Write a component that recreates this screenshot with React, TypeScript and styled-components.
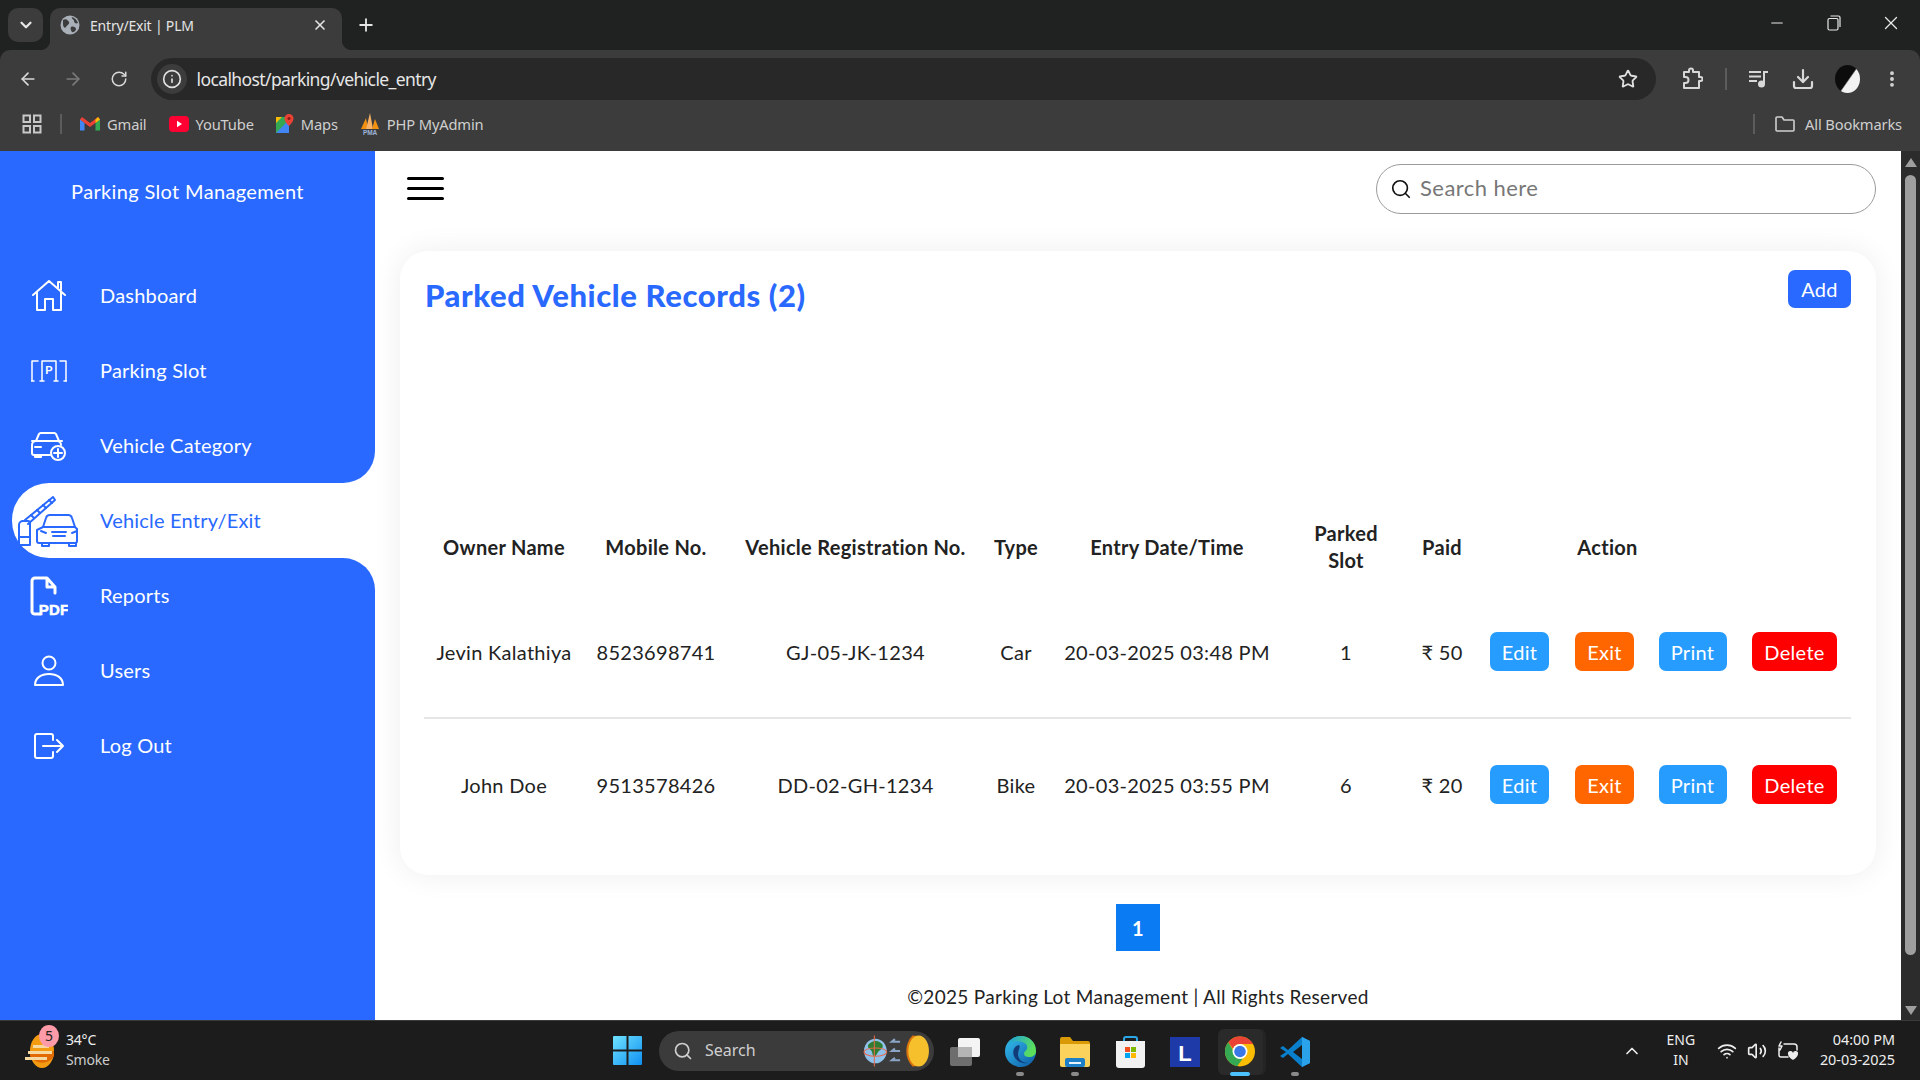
import styled, { createGlobalStyle } from "styled-components";
import { ArrowLeft, ArrowRight, RotateCw, Star, Download, EllipsisVertical, Plus, X, ChevronDown, ChevronUp, Search, Info, Minus, Wifi, Volume2 } from "lucide-react";

const BLUE = "#2969ff";
const UI_FONT = `"Noto Sans", "Open Sans", sans-serif`;
const PAGE_FONT = `"Lato", "Noto Sans", sans-serif`;

const GlobalStyle = createGlobalStyle`
  html, body { margin: 0; padding: 0; height: 100%; overflow: hidden; background: #fff; }
  * { box-sizing: border-box; }
`;

const Screen = styled.div`
  width: 1920px;
  height: 1080px;
  display: flex;
  flex-direction: column;
  overflow: hidden;
  background: #202221;
  font-family: ${PAGE_FONT};
  letter-spacing: 0.3px;
`;

/* browser chrome */
const TabStrip = styled.div`
  height: 50px;
  background: #202221;
  display: flex;
  padding: 8px 0 0 8px;
  font-family: ${UI_FONT};
  letter-spacing: 0;
`;

const TabList = styled.div`
  width: 35px;
  height: 34px;
  border-radius: 10px;
  background: #3c3c3c;
  color: #e6e6e6;
  display: flex;
  align-items: center;
  justify-content: center;
`;

const Tab = styled.div`
  position: relative;
  width: 292px;
  height: 42px;
  margin-left: 7px;
  padding: 0 14px 8px 10px;
  background: #3c3c3c;
  border-radius: 10px 10px 0 0;
  display: flex;
  align-items: center;
  color: #e4e4e4;
  font-size: 14px;
  &::before, &::after {
    content: "";
    position: absolute;
    bottom: 0;
    width: 10px;
    height: 10px;
  }
  &::before { left: -10px; background: radial-gradient(circle at 0 0, transparent 10px, #3c3c3c 10.5px); }
  &::after { right: -10px; background: radial-gradient(circle at 100% 0, transparent 10px, #3c3c3c 10.5px); }
`;

const TabTitle = styled.span`
  margin-left: 10px;
  flex: 1;
  letter-spacing: -0.2px;
`;

const NewTab = styled.div`
  margin-left: 14px;
  width: 20px;
  height: 34px;
  color: #e6e6e6;
  display: flex;
  align-items: center;
  justify-content: center;
`;

const WindowControls = styled.div`
  margin-left: auto;
  margin-top: -8px;
  padding-right: 1px;
  display: flex;
  height: 46px;
`;

const WindowButton = styled.div`
  width: 57px;
  display: flex;
  align-items: center;
  justify-content: center;
  color: #e8e8e8;
`;

const Toolbar = styled.div`
  height: 50px;
  background: #3c3c3c;
  border-radius: 10px 10px 0 0;
  display: flex;
  align-items: flex-start;
  padding: 8px 5px 0 5px;
  font-family: ${UI_FONT};
  letter-spacing: 0;
`;

const NavButton = styled.div<{ $dim?: boolean; $width?: number }>`
  width: ${(p) => p.$width ?? 45.5}px;
  height: 42px;
  display: flex;
  align-items: center;
  justify-content: center;
  color: ${(p) => (p.$dim ? "#7b7b7b" : "#d8d8d8")};
`;

const AddressBar = styled.div`
  flex: 1;
  height: 42px;
  margin: 0 13.5px 0 9px;
  background: #282828;
  border-radius: 21px;
  display: flex;
  align-items: center;
  padding: 0 18px 0 6px;
`;

const InfoChip = styled.div`
  width: 30px;
  height: 30px;
  border-radius: 50%;
  background: #3c3c3c;
  color: #e0e0e0;
  display: flex;
  align-items: center;
  justify-content: center;
`;

const Url = styled.span`
  flex: 1;
  margin-left: 10px;
  font-size: 17.5px;
  color: #e6e6e6;
  letter-spacing: -0.6px;
`;

const ToolbarDivider = styled.div`
  width: 2px;
  height: 22px;
  margin: 10px 10px 0;
  background: #5c5c5c;
`;

const Avatar = styled.div`
  width: 25px;
  height: 28px;
  border-radius: 50%;
  background: linear-gradient(125deg, #0c0c0c 52%, #f2f2f2 56%);
`;

const BookmarkBar = styled.div`
  height: 51px;
  background: #3c3c3c;
  display: flex;
  align-items: center;
  padding: 0 18px 3px 22px;
  font-family: ${UI_FONT};
  font-size: 14.7px;
  color: #cfcfcf;
  letter-spacing: 0;
`;

const BarDivider = styled.div<{ $right?: boolean }>`
  width: 2px;
  height: 20px;
  background: #5c5c5c;
  margin: ${(p) => (p.$right ? "0 20px 0 auto" : "0 18px 0 18px")};
`;

const Bookmark = styled.div`
  display: flex;
  align-items: center;
  gap: 7px;
  margin-right: 22px;
  letter-spacing: -0.15px;
`;

const PlainBookmark = styled(Bookmark)`
  margin-right: 0;
  gap: 10px;
`;

/* page */
const Body = styled.div`
  flex: 1;
  min-height: 0;
  display: flex;
`;

const Sidebar = styled.nav`
  width: 375px;
  background: ${BLUE};
  flex-shrink: 0;
`;

const Brand = styled.div`
  height: 107px;
  padding-top: 26px;
  text-align: center;
  color: #fff;
  font-size: 20px;
  line-height: 28px;
  letter-spacing: 0.35px;
`;

const NavSlot = styled.div<{ $underlay: boolean }>`
  height: 75px;
  background: ${(p) => (p.$underlay ? "#fff" : BLUE)};
`;

const NavLink = styled.div<{ $state: "plain" | "active" | "above" | "below" }>`
  height: 75px;
  display: flex;
  align-items: center;
  font-size: 20px;
  letter-spacing: 0.2px;
  background: ${(p) => (p.$state === "active" ? "#fff" : BLUE)};
  color: ${(p) => (p.$state === "active" ? BLUE : "#fff")};
  margin-left: ${(p) => (p.$state === "active" ? "12px" : "0")};
  padding-left: ${(p) => (p.$state === "active" ? "4px" : "16px")};
  border-radius: ${(p) =>
    p.$state === "active" ? "37px 0 0 37px" : p.$state === "above" ? "0 0 32px 0" : p.$state === "below" ? "0 32px 0 0" : "0"};
`;

const NavLabel = styled.span`
  margin-top: -2px;
`;

const NavIcon = styled.div<{ $wide?: boolean }>`
  width: 84px;
  flex-shrink: 0;
  display: flex;
  align-items: center;
  justify-content: ${(p) => (p.$wide ? "flex-start" : "center")};
  padding-right: ${(p) => (p.$wide ? "0" : "18px")};
`;

const Main = styled.main`
  flex: 1;
  min-width: 0;
  padding: 0 25px;
  display: flex;
  flex-direction: column;
  background: #fff;
`;

const TopBar = styled.div`
  height: 100px;
  flex-shrink: 0;
  padding: 13px 0 0 7px;
  display: flex;
  justify-content: space-between;
  align-items: flex-start;
`;

const Hamburger = styled.div`
  width: 37px;
  height: 23px;
  margin-top: 13px;
  display: flex;
  flex-direction: column;
  justify-content: space-between;
  span {
    display: block;
    height: 3px;
    border-radius: 2px;
    background: #000;
  }
`;

const SearchBox = styled.div`
  width: 500px;
  height: 50px;
  border: 1px solid #9b9b9b;
  border-radius: 25px;
  display: flex;
  align-items: center;
  gap: 8px;
  padding-left: 13px;
  color: #111;
  font-size: 22px;
  letter-spacing: 0.45px;
  span { color: #777; margin-top: -4px; }
`;

const Card = styled.section`
  height: 624px;
  flex-shrink: 0;
  padding: 0 25px 23px 24px;
  background: #fff;
  border-radius: 28px;
  box-shadow: 0 0 30px rgba(0, 0, 0, 0.07);
`;

const CardHead = styled.div`
  height: 263px;
  padding-top: 19px;
  display: flex;
  justify-content: space-between;
  align-items: flex-start;
`;

const CardTitle = styled.h2`
  margin: 5px 0 0 1px;
  font-size: 31px;
  line-height: 40px;
  font-weight: 900;
  letter-spacing: 0.6px;
  color: ${BLUE};
`;

const AddButton = styled.button`
  width: 63px;
  height: 38px;
  border: 0;
  border-radius: 7px;
  background: ${BLUE};
  color: #fff;
  font: 20px ${PAGE_FONT};
  letter-spacing: 0.3px;
`;

const Table = styled.table`
  width: 1427px;
  border-collapse: collapse;
  table-layout: fixed;
  color: #222;
  font-size: 20px;
  text-align: center;
`;

const Head = styled.th`
  padding: 6px 0 12px;
  font-weight: 700;
  line-height: 27px;
  color: #222;
`;

const Row = styled.tr`
  border-bottom: 2px solid #e6e6e6;
  td { height: 132px; }
  &:last-child { border-bottom: 0; }
`;

const Cell = styled.td`
  padding: 0;
`;

const ActionButton = styled.button<{ $color: string; $width: number }>`
  width: ${(p) => p.$width}px;
  height: 39px;
  border: 0;
  border-radius: 7px;
  background: ${(p) => p.$color};
  color: #fff;
  font: 20px ${PAGE_FONT};
  letter-spacing: 0.3px;
  padding: 0;
`;

const Pagination = styled.div`
  margin: 29px auto 0;
  width: 44px;
  height: 47px;
  background: #0b7bf3;
  color: #fff;
  font-weight: 700;
  font-size: 20px;
  display: flex;
  align-items: center;
  justify-content: center;
`;

const Footer = styled.footer`
  margin-top: 33px;
  text-align: center;
  font-size: 19px;
  line-height: 26px;
  color: #222;
`;

const Scrollbar = styled.div`
  width: 19px;
  flex-shrink: 0;
  background: #2c2c2c;
  display: flex;
  flex-direction: column;
  align-items: center;
  padding-top: 7px;
`;

const ScrollArrow = styled.div<{ $down?: boolean }>`
  width: 0;
  height: 0;
  border-left: 6px solid transparent;
  border-right: 6px solid transparent;
  ${(p) => (p.$down ? "border-top: 9px solid #9f9f9f;" : "border-bottom: 9px solid #9f9f9f;")}
`;

const ScrollThumb = styled.div`
  width: 11px;
  flex: 1;
  margin: 8px 0 51px;
  border-radius: 6px;
  background: #9f9f9f;
`;

const ScrollEnd = styled.div`
  height: 5px;
`;

/* windows taskbar */
const Taskbar = styled.div`
  height: 60px;
  flex-shrink: 0;
  background: #1c1c1c;
  border-top: 1px solid #3a3a3a;
  display: flex;
  align-items: center;
  font-family: ${UI_FONT};
  letter-spacing: 0;
  color: #eee;
`;

const Weather = styled.div`
  position: relative;
  width: 613px;
  flex-shrink: 0;
  padding-left: 25px;
  display: flex;
  align-items: center;
  gap: 11px;
`;

const WeatherBadge = styled.div`
  position: absolute;
  left: 39px;
  top: -7px;
  width: 20px;
  height: 22px;
  border-radius: 50%;
  background: #ff9aa8;
  color: #222;
  font-size: 14px;
  line-height: 22px;
  text-align: center;
`;

const TwoLines = styled.div`
  margin-top: -2px;
  font-size: 14px;
  line-height: 20px;
  letter-spacing: -0.2px;
  small { display: block; font-size: 14px; color: #ccc; }
`;

const StartSlot = styled.div`
  width: 29px;
  margin-right: 17px;
  display: flex;
`;

const TaskSearch = styled.div`
  width: 275px;
  height: 40px;
  margin-right: 3.5px;
  padding: 0 3px 0 14px;
  border-radius: 20px;
  background: #3b3b3b;
  color: #cfcfcf;
  font-size: 16px;
  display: flex;
  align-items: center;
  gap: 12px;
  span { flex: 1; margin-top: -2px; }
`;

const TaskIcon = styled.div<{ $active?: boolean; $mark?: "dot" | "bar" }>`
  position: relative;
  width: 55px;
  height: 46px;
  margin-top: 2px;
  display: flex;
  align-items: center;
  justify-content: center;
  svg { position: relative; }
  &::before {
    display: ${(p) => (p.$active ? "block" : "none")};
    content: "";
    position: absolute;
    top: 0;
    bottom: 0;
    left: 5px;
    right: 5px;
    border-radius: 6px;
    background: #2a2a2a;
    box-shadow: 3px 0 0 #242424;
  }
  &::after {
    display: ${(p) => (p.$mark ? "block" : "none")};
    content: "";
    position: absolute;
    bottom: -1px;
    left: 50%;
    transform: translateX(-50%);
    width: ${(p) => (p.$mark === "bar" ? "20px" : "8px")};
    height: 4px;
    border-radius: 2px;
    background: ${(p) => (p.$mark === "bar" ? "#4cc2ff" : "#8a8a8a")};
  }
`;

const Tray = styled.div`
  margin-left: auto;
  padding-right: 25px;
  display: flex;
  align-items: center;
`;

const TrayLang = styled.div`
  width: 40px;
  margin: -2px 16px 0 19px;
  text-align: center;
  font-size: 14px;
  line-height: 20px;
`;

const TrayIcons = styled.div`
  display: flex;
  align-items: center;
  gap: 10px;
  margin-right: 21px;
`;

const Clock = styled.div`
  margin-top: -2px;
  text-align: right;
  font-size: 14.4px;
  line-height: 20px;
`;

/* drawings */
const stroke = { fill: "none", stroke: "currentColor", strokeWidth: 1.6, strokeLinecap: "round", strokeLinejoin: "round" } as const;

const Globe = () => (
  <svg width="20" height="20" viewBox="0 0 20 20">
    <circle cx="10" cy="10" r="9.5" fill="#a9b0b8" />
    <path d="M3 5c3-2 5 0 6 2s-2 3-3 5-3 0-3-3zM12 2c3 1 5 3 6 6-2 1-4 0-4-2s-3-2-2-4zM11 12c2-1 5 0 5 2s-3 4-4 3-2-4-1-5z" fill="#3c3c3c" />
  </svg>
);

const AppsGrid = () => (
  <svg width="20" height="20" viewBox="0 0 20 20" fill="none" stroke="#c8c8c8" strokeWidth="2">
    <rect x="1.5" y="1.5" width="6.5" height="6.5" /><rect x="12" y="1.5" width="6.5" height="6.5" />
    <rect x="1.5" y="12" width="6.5" height="6.5" /><rect x="12" y="12" width="6.5" height="6.5" />
  </svg>
);

const GmailIcon = () => (
  <svg width="20" height="16" viewBox="0 0 20 16">
    <path d="M0 3v11.5h4.5V7z" fill="#4285f4" /><path d="M20 3v11.5h-4.5V7z" fill="#34a853" />
    <path d="M0 3.5 2 1l8 6 8-6 2 2.5-10 7.5z" fill="#ea4335" /><path d="M15.5 3.5 18 1l2 2.5-4.5 3.5z" fill="#fbbc04" />
  </svg>
);

const YoutubeIcon = () => (
  <svg width="20" height="16" viewBox="0 0 20 16">
    <rect width="20" height="16" rx="4" fill="#ff0033" /><path d="M8 4.8v6.4l5-3.2z" fill="#fff" />
  </svg>
);

const MapsIcon = () => (
  <svg width="18" height="20" viewBox="0 0 18 20">
    <path d="M0 3h13v16H0z" fill="#34a853" /><path d="M0 19 13 6v13z" fill="#4285f4" /><path d="M0 3h6L0 9z" fill="#fbbc04" />
    <path d="M13 0a4.5 4.5 0 0 1 4.5 4.5C17.500 8 13 12 13 12S8.500 8 8.500 4.500A4.500 4.500 0 0 1 13 0z" fill="#ea4335" /><circle cx="13" cy="4.500" r="1.600" fill="#8a1c14" />
  </svg>
);

const PmaIcon = () => (
  <svg width="20" height="22" viewBox="0 0 20 22">
    <path d="M1 16 6 5l2 11z" fill="#f29111" /><path d="M6 16 10 0l3 16z" fill="#f7b267" /><path d="M12 16l3-10 4 10z" fill="#f29111" />
    <text x="10" y="21.500" textAnchor="middle" fontSize="6.500" fontWeight="700" fill="#9db4d8" fontFamily="Liberation Sans">PMA</text>
  </svg>
);

const ExtensionIcon = () => (
  <svg width="22" height="24" viewBox="0 0 22 24" {...stroke} stroke="#d8d8d8" strokeWidth="2">
    <path d="M3 5h5V3.500a2 2 0 0 1 4 0V5h6v5h1.500a2 2 0 0 1 0 4H18v7H3v-5h1.500a3 3 0 0 0 0-6H3z" />
  </svg>
);

const QueueIcon = () => (
  <svg width="20" height="18" viewBox="0 0 20 18" fill="#d8d8d8">
    <rect y="1" width="12" height="2" /><rect y="5.500" width="12" height="2" /><rect y="10" width="8" height="2" />
    <rect x="14" y="1" width="5" height="2" /><rect x="14" y="1" width="2" height="13" /><circle cx="12.500" cy="14" r="3.500" />
  </svg>
);

const FolderIcon = () => (
  <svg width="20" height="18" viewBox="0 0 20 18" {...stroke} stroke="#cfcfcf">
    <path d="M1 3a1 1 0 0 1 1-1h5l2 3h9a1 1 0 0 1 1 1v9a1 1 0 0 1-1 1H2a1 1 0 0 1-1-1z" />
  </svg>
);

const RestoreIcon = () => (
  <svg width="14" height="16" viewBox="0 0 14 16" fill="none" stroke="#e8e8e8" strokeWidth="1.200">
    <rect x="1" y="3.500" width="10" height="11.500" rx="1.500" /><path d="M3.500 1h8a1.500 1.500 0 0 1 1.500 1.500V12" />
  </svg>
);

const HomeIcon = () => (
  <svg width="34" height="32" viewBox="0 0 34 32" {...stroke} strokeWidth="2">
    <path d="M1 15 17 1l16 14M5 12v18h8V19h8v11h8V12M26 8V2h3v8" />
  </svg>
);

const SlotIcon = () => (
  <svg width="36" height="24" viewBox="0 0 36 24" {...stroke} strokeWidth="1.500">
    <path d="M1 22V2h6M29 2h6v20M11 2v20M25 2v20M0 22h3M9 22h4M23 22h4M33 22h3M11 2h14" />
    <text x="18" y="15" textAnchor="middle" fontSize="11" fontWeight="700" fill="currentColor" stroke="none" fontFamily="Liberation Sans">P</text>
  </svg>
);

const CarPlusIcon = () => (
  <svg width="36" height="30" viewBox="0 0 36 30" {...stroke} strokeWidth="2">
    <path d="M5 10 8 3a2 2 0 0 1 2-1h13a2 2 0 0 1 2 1l3 7M1 10h30M19 24H3a2 2 0 0 1-2-2V14a4 4 0 0 1 4-4h21a4 4 0 0 1 4 4M4 24v2h6v-2M4 16h6" />
    <circle cx="27" cy="22" r="7" /><path d="M27 18v8M23 22h8" />
  </svg>
);

const GateCarIcon = () => (
  <svg width="66" height="52" viewBox="0 0 64 52" {...stroke} strokeWidth="2">
    <path d="M2 50V30a4 4 0 0 1 4-4h5a2 2 0 0 1 2 2v22zM2 42h11" />
    <path d="M8 25 36 2l2 3L11 29" />
    <path d="M14 20l3 3M20 15l3 3M26 10l3 3M32 5l3 3" />
    <path d="M26 32l3-9a4 4 0 0 1 4-3h18a4 4 0 0 1 4 3l3 9 2 2v12a2 2 0 0 1-2 2H22a2 2 0 0 1-2-2V35z" />
    <path d="M25 48v3h7v-3M52 48v3h7v-3M26 32h32M35 37h14M36 41h12M24 36l5 2M60 36l-5 2" />
  </svg>
);

const PdfIcon = () => (
  <svg width="38" height="40" viewBox="0 0 38 40">
    <path d="M25 17V11l-8-9H5a3 3 0 0 0-3 3v31a3 3 0 0 0 3 2h5M17 2v9h8" fill="none" stroke="currentColor" strokeWidth="3" strokeLinejoin="round" strokeLinecap="round" />
    <text x="24" y="38.500" textAnchor="middle" fontSize="15" fontWeight="700" stroke="currentColor" strokeWidth="0.5" fill="currentColor" fontFamily="Liberation Sans">PDF</text>
  </svg>
);

const UserIcon = () => (
  <svg width="30" height="32" viewBox="0 0 30 32" {...stroke} strokeWidth="2">
    <circle cx="15" cy="8" r="6.500" /><path d="M1 30c0-7 6-11 14-11s14 4 14 11z" />
  </svg>
);

const LogoutIcon = () => (
  <svg width="30" height="26" viewBox="0 0 30 26" {...stroke} strokeWidth="2">
    <path d="M19 7V3a2 2 0 0 0-2-2H3a2 2 0 0 0-2 2v20a2 2 0 0 0 2 2h14a2 2 0 0 0 2-2v-4M9 13h20M23 7l6 6-6 6" />
  </svg>
);

const WeatherIcon = () => (
  <svg width="30" height="34" viewBox="0 0 30 34">
    <ellipse cx="17" cy="17" rx="12" ry="17" fill="#f39c12" />
    <path d="M5 17h24v5a14 14 0 0 1-24 0z" fill="#e26a00" />
    <path d="M0 23h22v3H0zM3 17h24v3H3zM8 11h16v3H8z" fill="#f6d9a0" />
  </svg>
);

const StartIcon = () => (
  <svg width="29" height="29" viewBox="0 0 29 29">
    <defs>
      <linearGradient id="win" x1="0" y1="0" x2="1" y2="1"><stop offset="0" stopColor="#6fe3ff" /><stop offset="1" stopColor="#0f8ff0" /></linearGradient>
    </defs>
    <path d="M0 1a1 1 0 0 1 1-1h12.500v13.500H0zM15.500 0H28a1 1 0 0 1 1 1v12.500H15.500zM0 15.500h13.500V29H1a1 1 0 0 1-1-1zM15.500 15.500H29V28a1 1 0 0 1-1 1H15.500z" fill="url(#win)" />
  </svg>
);

const SearchArt = () => (
  <svg width="68" height="34" viewBox="0 0 66 32">
    <ellipse cx="12" cy="16" rx="11" ry="12" fill="#8fc1ea" />
    <path d="M5 10c4-5 11-5 14 0 1 5-3 4-5 8s-4 5-5 0-5-3-4-8z" fill="#2f7d32" />
    <path d="M11 1v30" stroke="#e8694a" /><ellipse cx="12" cy="17" rx="11" ry="4" fill="none" stroke="#e8694a" />
    <path d="M36 7h-8l3-2.500M36 16h-8l3-2.500M36 25h-8l3-2.500" stroke="#8aa5c5" strokeWidth="2" fill="none" />
    <path d="M48 1c-8 8-8 22 0 30 4 0 8-1 10-3 6-6 6-18 0-24-2-2-6-3-10-3z" fill="#d9730d" />
    <ellipse cx="54" cy="16" rx="10" ry="15" fill="#f6c02c" />
  </svg>
);

const TaskViewIcon = () => (
  <svg width="30" height="28" viewBox="0 0 30 28">
    <rect y="9" width="22" height="19" rx="2" fill="#6e6e6e" />
    <rect x="8" width="22" height="19" rx="2" fill="#f4f4f4" />
    <rect x="8" y="9" width="14" height="10" fill="#b5b5b5" />
  </svg>
);

const EdgeIcon = () => (
  <svg width="31" height="31" viewBox="0 0 31 31">
    <defs>
      <linearGradient id="edgeA" x1="0" y1="0" x2="1" y2="1"><stop offset="0" stopColor="#35c1f1" /><stop offset="1" stopColor="#0c59a4" /></linearGradient>
      <linearGradient id="edgeB" x1="0" y1="0" x2="1" y2="0.400"><stop offset="0" stopColor="#1b9de2" /><stop offset="1" stopColor="#5ce05a" /></linearGradient>
    </defs>
    <circle cx="15.500" cy="15.500" r="15.500" fill="url(#edgeA)" />
    <path d="M3 9C6 2 11 0 16 0c8 0 15 6 15 15 0 4-3 6-7 6-3 0-5-1-5-3 0-4 4-3 3-8C21 5 7 3 3 9z" fill="url(#edgeB)" />
    <path d="M14 9c-5 1-7 6-5 11 2 5 8 8 14 7-6 0-10-4-10-9 0-4 3-7 1-9z" fill="#123c78" />
  </svg>
);

const ExplorerIcon = () => (
  <svg width="30" height="30" viewBox="0 0 30 30">
    <path d="M0 2a2 2 0 0 1 2-2h8l3 4h15a2 2 0 0 1 2 2v4H0z" fill="#d99a06" />
    <path d="M0 7h30v21a2 2 0 0 1-2 2H2a2 2 0 0 1-2-2z" fill="#fbd35c" />
    <rect x="5" y="21" width="20" height="9" rx="2" fill="#1c7fc7" /><rect x="9" y="25" width="12" height="2" fill="#e8f3fb" />
  </svg>
);

const StoreIcon = () => (
  <svg width="29" height="32" viewBox="0 0 29 32">
    <path d="M8 6V3a2 2 0 0 1 2-2h9a2 2 0 0 1 2 2v3" fill="none" stroke="#2aa7e8" strokeWidth="2" />
    <path d="M0 5h29v24a3 3 0 0 1-3 3H3a3 3 0 0 1-3-3z" fill="#f2f2f2" />
    <rect x="9" y="11" width="5" height="5" fill="#f25022" /><rect x="15" y="11" width="5" height="5" fill="#7fba00" />
    <rect x="9" y="17" width="5" height="5" fill="#00a4ef" /><rect x="15" y="17" width="5" height="5" fill="#ffb900" />
  </svg>
);

const LauncherIcon = () => (
  <svg width="30" height="30" viewBox="0 0 30 30">
    <rect width="30" height="30" fill="#1e3aa8" />
    <text x="15" y="24" textAnchor="middle" fontSize="22" fontWeight="700" fill="#fff" fontFamily="Liberation Sans">L</text>
  </svg>
);

const ChromeIcon = () => (
  <svg width="30" height="31" viewBox="0 0 32 32">
    <circle cx="16" cy="16" r="16" fill="#fbbc04" />
    <path d="M16 0a16 16 0 0 1 13.900 8H16a8 8 0 0 0-7.500 5L3.500 6A16 16 0 0 1 16 0z" fill="#ea4335" />
    <path d="M3.500 6 11 19a8 8 0 0 0 8 4.500L13 31.700A16 16 0 0 1 3.500 6z" fill="#34a853" />
    <circle cx="16" cy="16" r="8" fill="#fff" /><circle cx="16" cy="16" r="6.200" fill="#3b78e7" />
  </svg>
);

const VsCodeIcon = () => (
  <svg width="30" height="30" viewBox="0 0 30 30">
    <path d="M22 0 30 4v22l-8 4L8 17l-5 4-3-2 6-4-6-4 3-2 5 4z" fill="#0a7fcb" />
    <path d="M22 8v14l-9-7z" fill="#1c1c1c" />
    <path d="M22 0l8 4v22l-8 4z" fill="#2ba3ea" />
  </svg>
);

const BatteryIcon = () => (
  <svg width="22" height="20" viewBox="0 0 22 20" {...stroke} stroke="#eee" strokeWidth="1.500">
    <path d="M7 3h10a3 3 0 0 1 3 3v3M2 7v7a2 2 0 0 0 2 2h7M4 1 2 5h3l-2 4" />
    <path d="M16 19s-5-3-5-6a2.500 2.500 0 0 1 5-1 2.500 2.500 0 0 1 5 1c0 3-5 6-5 6z" fill="#eee" strokeWidth="0" />
  </svg>
);

type NavEntry = { label: string; icon: React.ReactNode; wide?: boolean };

const navItems: NavEntry[] = [
  { label: "Dashboard", icon: <HomeIcon /> },
  { label: "Parking Slot", icon: <SlotIcon /> },
  { label: "Vehicle Category", icon: <CarPlusIcon /> },
  { label: "Vehicle Entry/Exit", icon: <GateCarIcon />, wide: true },
  { label: "Reports", icon: <PdfIcon /> },
  { label: "Users", icon: <UserIcon /> },
  { label: "Log Out", icon: <LogoutIcon /> },
];

const ACTIVE_INDEX = 3;

const columns = [160, 144, 255, 66, 236, 122, 70, 85, 85, 91, 113];

const records = [
  { owner: "Jevin Kalathiya", mobile: "8523698741", reg: "GJ-05-JK-1234", type: "Car", entry: "20-03-2025 03:48 PM", slot: "1", paid: "₹ 50" },
  { owner: "John Doe", mobile: "9513578426", reg: "DD-02-GH-1234", type: "Bike", entry: "20-03-2025 03:55 PM", slot: "6", paid: "₹ 20" },
];

function App() {
  return (
    <Screen>
      <GlobalStyle />
      <TabStrip>
        <TabList><ChevronDown size={18} strokeWidth={3} /></TabList>
        <Tab>
          <Globe />
          <TabTitle>Entry/Exit | PLM</TabTitle>
          <X size={16} strokeWidth={2.5} />
        </Tab>
        <NewTab><Plus size={20} strokeWidth={2.2} /></NewTab>
        <WindowControls>
          <WindowButton><Minus size={18} strokeWidth={1.5} /></WindowButton>
          <WindowButton><RestoreIcon /></WindowButton>
          <WindowButton><X size={22} strokeWidth={1.4} /></WindowButton>
        </WindowControls>
      </TabStrip>
      <Toolbar>
        <NavButton><ArrowLeft size={20} /></NavButton>
        <NavButton $dim><ArrowRight size={20} /></NavButton>
        <NavButton><RotateCw size={18} /></NavButton>
        <AddressBar>
          <InfoChip><Info size={20} /></InfoChip>
          <Url>localhost/parking/vehicle_entry</Url>
          <Star size={20} color="#e0e0e0" strokeWidth={2.2} />
        </AddressBar>
        <NavButton><ExtensionIcon /></NavButton>
        <ToolbarDivider />
        <NavButton $width={44}><QueueIcon /></NavButton>
        <NavButton $width={44}><Download size={24} strokeWidth={2.2} /></NavButton>
        <NavButton $width={44.5}><Avatar /></NavButton>
        <NavButton><EllipsisVertical size={20} strokeWidth={2.6} /></NavButton>
      </Toolbar>
      <BookmarkBar>
        <AppsGrid />
        <BarDivider />
        <Bookmark><GmailIcon />Gmail</Bookmark>
        <Bookmark><YoutubeIcon />YouTube</Bookmark>
        <Bookmark><MapsIcon />Maps</Bookmark>
        <Bookmark><PmaIcon />PHP MyAdmin</Bookmark>
        <BarDivider $right />
        <PlainBookmark><FolderIcon />All Bookmarks</PlainBookmark>
      </BookmarkBar>

      <Body>
        <Sidebar>
          <Brand>Parking Slot Management</Brand>
          {navItems.map((item, index) => {
            const state =
              index === ACTIVE_INDEX ? "active" : index === ACTIVE_INDEX - 1 ? "above" : index === ACTIVE_INDEX + 1 ? "below" : "plain";
            return (
              <NavSlot key={item.label} $underlay={state === "above" || state === "below"}>
                <NavLink $state={state}>
                  <NavIcon $wide={item.wide}>{item.icon}</NavIcon>
                  <NavLabel>{item.label}</NavLabel>
                </NavLink>
              </NavSlot>
            );
          })}
        </Sidebar>

        <Main>
          <TopBar>
            <Hamburger><span /><span /><span /></Hamburger>
            <SearchBox>
              <Search size={22} strokeWidth={1.8} />
              <span>Search here</span>
            </SearchBox>
          </TopBar>
          <Card>
            <CardHead>
              <CardTitle>Parked Vehicle Records (2)</CardTitle>
              <AddButton>Add</AddButton>
            </CardHead>
            <Table>
              <colgroup>
                {columns.map((width, index) => (
                  <col key={index} width={width} />
                ))}
              </colgroup>
              <thead>
                <tr>
                  <Head>Owner Name</Head>
                  <Head>Mobile No.</Head>
                  <Head>Vehicle Registration No.</Head>
                  <Head>Type</Head>
                  <Head>Entry Date/Time</Head>
                  <Head>Parked<br />Slot</Head>
                  <Head>Paid</Head>
                  <Head colSpan={3}>Action</Head>
                  <Head />
                </tr>
              </thead>
              <tbody>
                {records.map((record) => (
                  <Row key={record.reg}>
                    <Cell>{record.owner}</Cell>
                    <Cell>{record.mobile}</Cell>
                    <Cell>{record.reg}</Cell>
                    <Cell>{record.type}</Cell>
                    <Cell>{record.entry}</Cell>
                    <Cell>{record.slot}</Cell>
                    <Cell>{record.paid}</Cell>
                    <Cell><ActionButton $color="#279cff" $width={59}>Edit</ActionButton></Cell>
                    <Cell><ActionButton $color="#ff6600" $width={59}>Exit</ActionButton></Cell>
                    <Cell><ActionButton $color="#279cff" $width={68}>Print</ActionButton></Cell>
                    <Cell><ActionButton $color="#ff0000" $width={85}>Delete</ActionButton></Cell>
                  </Row>
                ))}
              </tbody>
            </Table>
          </Card>
          <Pagination>1</Pagination>
          <Footer>©2025 Parking Lot Management | All Rights Reserved</Footer>
        </Main>

        <Scrollbar>
          <ScrollArrow />
          <ScrollThumb />
          <ScrollArrow $down />
          <ScrollEnd />
        </Scrollbar>
      </Body>

      <Taskbar>
        <Weather>
          <WeatherIcon />
          <WeatherBadge>5</WeatherBadge>
          <TwoLines>34°C<small>Smoke</small></TwoLines>
        </Weather>
        <StartSlot><StartIcon /></StartSlot>
        <TaskSearch>
          <Search size={20} />
          <span>Search</span>
          <SearchArt />
        </TaskSearch>
        <TaskIcon><TaskViewIcon /></TaskIcon>
        <TaskIcon $mark="dot"><EdgeIcon /></TaskIcon>
        <TaskIcon $mark="dot"><ExplorerIcon /></TaskIcon>
        <TaskIcon><StoreIcon /></TaskIcon>
        <TaskIcon><LauncherIcon /></TaskIcon>
        <TaskIcon $active $mark="bar"><ChromeIcon /></TaskIcon>
        <TaskIcon $mark="dot"><VsCodeIcon /></TaskIcon>
        <Tray>
          <ChevronUp size={20} strokeWidth={2} />
          <TrayLang>ENG<br />IN</TrayLang>
          <TrayIcons>
            <Wifi size={20} />
            <Volume2 size={20} />
            <BatteryIcon />
          </TrayIcons>
          <Clock>04:00 PM<br />20-03-2025</Clock>
        </Tray>
      </Taskbar>
    </Screen>
  );
}

export default App;
